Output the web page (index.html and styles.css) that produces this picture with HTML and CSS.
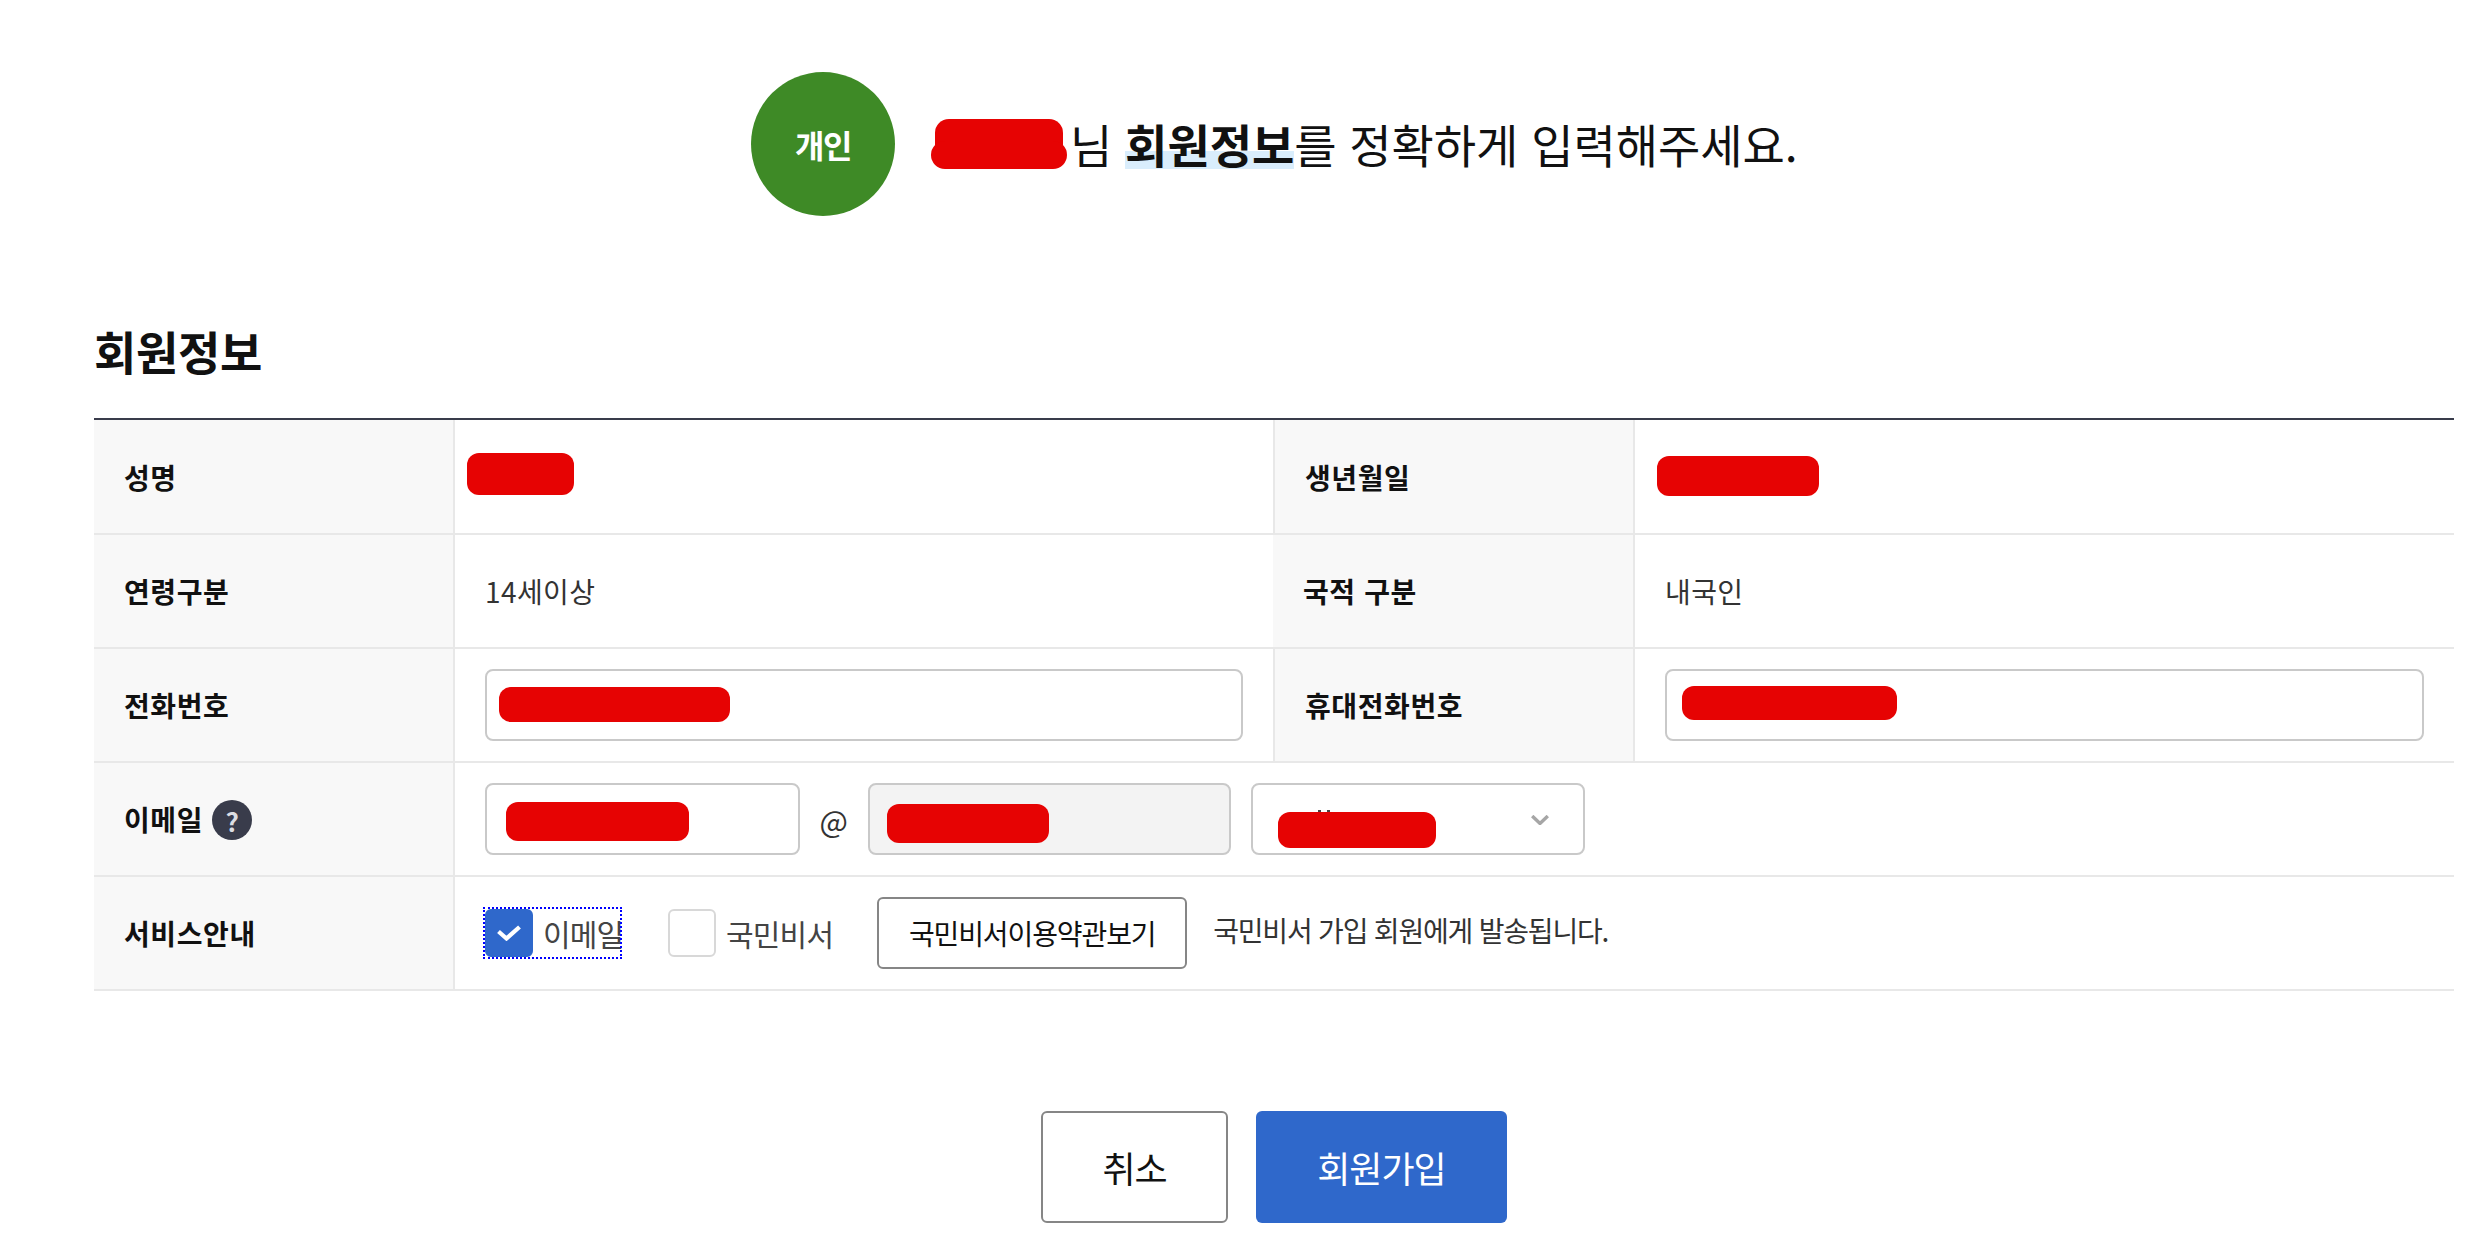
FILE: index.html
```html
<!DOCTYPE html>
<html lang="ko">
<head>
<meta charset="utf-8">
<title>회원정보 입력</title>
<link rel="stylesheet" href="styles.css">
</head>
<body>
<main class="page">
  <header class="intro">
    <div class="badge">개인</div>
    <p class="intro-text"><span class="intro-name"><span class="mask mask-name-top"></span><span class="mask mask-name-bottom"></span></span>님 <strong class="mark">회원정보</strong>를 정확하게 입력해주세요.</p>
  </header>

  <h2 class="section-title">회원정보</h2>

  <div class="info-table">
    <div class="th">성명</div>
    <div class="td"><span class="mask mask-name"></span></div>
    <div class="th">생년월일</div>
    <div class="td"><span class="mask mask-birth"></span></div>

    <div class="th">연령구분</div>
    <div class="td">14세이상</div>
    <div class="th">국적 구분</div>
    <div class="td">내국인</div>

    <div class="th">전화번호</div>
    <div class="td">
      <label class="field field-full"><input class="input" type="text" aria-label="전화번호"><span class="mask mask-phone"></span></label>
    </div>
    <div class="th">휴대전화번호</div>
    <div class="td">
      <label class="field field-full"><input class="input" type="text" aria-label="휴대전화번호"><span class="mask mask-mobile"></span></label>
    </div>

    <div class="th"><span>이메일</span><span class="help">?</span></div>
    <div class="td td-wide email-row">
      <label class="field field-id"><input class="input" type="text" aria-label="이메일 아이디"><span class="mask mask-id"></span></label>
      <span class="at">@</span>
      <label class="field field-domain"><input class="input input-off" type="text" disabled aria-label="이메일 도메인"><span class="mask mask-domain"></span></label>
      <div class="field field-select">
        <span class="select-tick"></span>
        <svg class="chevron" viewBox="0 0 18 10" width="18" height="10" aria-hidden="true"><path d="M1.200 1l7.800 7.500L16.800 1" fill="none" stroke="#a6a6a6" stroke-width="3.400"/></svg>
        <span class="mask mask-select"></span>
      </div>
    </div>

    <div class="th">서비스안내</div>
    <div class="td td-wide service-row">
      <label class="check check-focus">
        <span class="box box-on">
          <svg viewBox="0 0 24 16" width="24" height="16" aria-hidden="true"><path d="M1.500 6.500l8 7L22.500 2" fill="none" stroke="#fff" stroke-width="4.200"/></svg>
        </span>
        <span class="check-label">이메일</span>
      </label>
      <label class="check">
        <span class="box"></span>
        <span class="check-label">국민비서</span>
      </label>
      <button class="btn-terms" type="button">국민비서이용약관보기</button>
      <span class="note">국민비서 가입 회원에게 발송됩니다.</span>
    </div>
  </div>

  <div class="actions">
    <button class="btn btn-cancel" type="button">취소</button>
    <button class="btn btn-primary" type="button">회원가입</button>
  </div>
</main>
</body>
</html>
```
FILE: styles.css
```css
* { box-sizing: border-box; }
html, body { margin: 0; padding: 0; background: #fff; }
body {
  font-family: "Noto Sans CJK KR", "Noto Sans", sans-serif;
  color: #111;
  overflow: hidden;
}
.page { width: 2490px; height: 1248px; padding: 72px 36px 0 94px; }

.intro { display: flex; align-items: center; margin-left: 657px; height: 144px; }
.badge {
  width: 144px; height: 144px; border-radius: 50%;
  background: #3e8a26; color: #fff;
  display: flex; align-items: center; justify-content: center;
  font-size: 32px; font-weight: 700; letter-spacing: -1.500px;
}
.intro-text { margin: 0 0 0 36px; font-size: 46px; letter-spacing: -0.050px; white-space: pre; line-height: 60px; }
.intro-name { position: relative; display: inline-block; vertical-align: middle; width: 139px; height: 50px; }
.mark { font-weight: 700; background: linear-gradient(transparent 62%, #d9edfc 62%, #d9edfc 90%, transparent 90%); }

.section-title { margin: 98px 0 0; height: 72px; line-height: 72px; font-size: 46px; font-weight: 700; letter-spacing: -0.300px; color: #111; }

.info-table {
  margin-top: 32px;
  display: grid;
  grid-template-columns: 361px 818px 362px 819px;
  grid-template-rows: 115px;
  grid-auto-rows: 114px;
  border-top: 2px solid #393c4b;
}
.th, .td {
  display: flex; align-items: center;
  border-bottom: 2px solid #e8e8e8;
  padding-left: 30px;
  font-size: 28px;
}
.th { background: #f8f8f8; font-weight: 700; color: #111; border-right: 2px solid #e8e8e8; letter-spacing: 0.600px; white-space: pre; }
.td { color: #333; position: relative; padding-right: 30px; letter-spacing: 0.400px; }
.th:nth-child(8n+3) { border-left: 2px solid #e8e8e8; }
.td-wide { grid-column: 2 / 5; }

.help {
  display: inline-flex; align-items: center; justify-content: center;
  width: 40px; height: 40px; border-radius: 50%;
  margin-left: 9px; margin-top: 2px;
  background: #393c4b; color: #dcdde2; font-size: 26px; font-weight: 700; letter-spacing: 0;
}

.field { position: relative; display: block; height: 72px; flex: none; }
.field-full { width: 100%; }
.field-id { width: 315px; }
.field-domain { width: 363px; }
.field-select { width: 334px; margin-left: 20px; border: 2px solid #c9c9c9; border-radius: 8px; background: #fff; }
.input {
  display: block; width: 100%; height: 100%; margin: 0; padding: 0 20px;
  border: 2px solid #c9c9c9; border-radius: 8px;
  background: #fff; font: inherit; outline: none;
}
.input-off { background: #f3f3f3; }

.at { width: 68px; text-align: center; font-size: 30px; color: #333; padding-top: 2px; }

.chevron { position: absolute; right: 34px; top: 30px; }
.select-tick { position: absolute; left: 65px; top: 25px; width: 3px; height: 4px; background: #444; box-shadow: 9px 0 #444; }

.mask { position: absolute; background: #e60303; border-radius: 12px; }
.mask-name-top { left: 4px; top: -6px; width: 128px; height: 40px; border-radius: 14px; }
.mask-name-bottom { left: 0; top: 16px; width: 136px; height: 28px; border-radius: 14px; }
.mask-name { left: 12px; top: 33px; width: 107px; height: 42px; }
.mask-birth { left: 22px; top: 36px; width: 162px; height: 40px; }
.mask-phone { left: 14px; top: 18px; width: 231px; height: 35px; }
.mask-mobile { left: 17px; top: 17px; width: 215px; height: 34px; }
.mask-id { left: 21px; top: 19px; width: 183px; height: 39px; }
.mask-domain { left: 19px; top: 21px; width: 162px; height: 39px; }
.mask-select { left: 25px; top: 27px; width: 158px; height: 36px; }

.check { display: flex; align-items: center; font-size: 30px; color: #444; letter-spacing: -0.800px; white-space: nowrap; }
.check-focus { height: 52px; outline: 2px dotted #00f; outline-offset: -2px; padding: 0 2px; width: 139px; margin-left: -2px; }
.box {
  width: 48px; height: 48px; border-radius: 6px; flex: none;
  border: 2px solid #d8d8d8; background: #fff;
  display: flex; align-items: center; justify-content: center;
}
.box-on { background: #2f68cb; border-color: #2f68cb; }
.check-label { margin-left: 10px; }
.check + .check { margin-left: 46px; }
.btn-terms {
  width: 310px; height: 72px; margin-left: 44px;
  background: #fff; border: 2px solid #868686; border-radius: 6px;
  font: inherit; font-size: 28px; color: #111; letter-spacing: -1.100px;
  padding: 0;
}
.note { margin-left: 26px; font-size: 28px; color: #333; letter-spacing: -1.200px; margin-top: -6px; }

.actions { display: flex; justify-content: center; gap: 28px; margin-top: 120px; }
.btn { height: 112px; border-radius: 6px; font: inherit; font-size: 36px; letter-spacing: -1px; padding: 0; }
.btn-cancel { width: 187px; background: #fff; border: 2px solid #868686; color: #111; }
.btn-primary { width: 251px; background: #2f68cb; border: 0; color: #fff; }
```
